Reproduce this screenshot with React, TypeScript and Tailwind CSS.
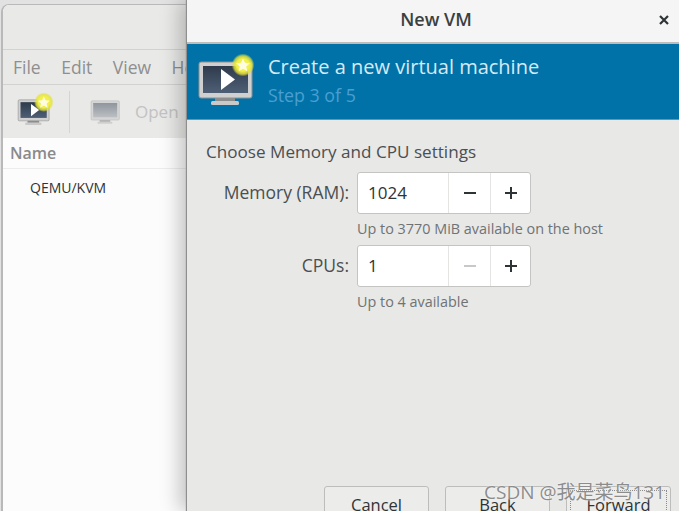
const font = { fontFamily: '"Open Sans", "Noto Sans CJK SC", sans-serif' }

// Monitor + star icon, used in the toolbar and in the banner
function VmIcon({ id, star, faded, className }: { id: string; star?: 'small' | 'large'; faded?: boolean; className: string }) {
  const starTransform = star === 'small' ? 'translate(46 10) scale(1.3)' : 'translate(46 9) scale(0.88)'
  return (
    <svg viewBox="0 0 60 52" className={className} overflow="visible">
      <defs>
        <linearGradient id={`${id}-screen`} x1="0" y1="0" x2="0" y2="1">
          <stop offset="0" stopColor={faded ? '#8f959c' : '#2f3b4c'} />
          <stop offset="1" stopColor={faded ? '#bcc0c4' : '#4e5f75'} />
        </linearGradient>
        <radialGradient id={`${id}-glow`}>
          <stop offset="0.55" stopColor="#f2f04a" />
          <stop offset="0.8" stopColor="#e4e23a" stopOpacity="0.8" />
          <stop offset="1" stopColor="#e4e23a" stopOpacity="0" />
        </radialGradient>
      </defs>
      <rect x="18" y="41" width="20" height="5" fill={faded ? '#b5b5b5' : '#8c8c8c'} />
      <rect x="14" y="45" width="28" height="4" rx="1.5" fill={faded ? '#cfcfcf' : '#c9c9c9'} />
      <rect x="2" y="6" width="53" height="36" rx="2" fill={faded ? '#d6d6d6' : '#d0d0d0'} stroke={faded ? '#b8b8b8' : '#8f8f8f'} strokeWidth="1" />
      <rect x="6" y="10" width="45" height="27" fill={`url(#${id}-screen)`} />
      {!faded && <path d="M24 13 L38 23.5 L24 34 Z" fill="#fff" />}
      {star && (
        <g transform={starTransform}>
          <circle r="13" fill={`url(#${id}-glow)`} />
          <path d="M0 -7.5 L2.3 -2.5 L7.8 -1.9 L3.7 1.8 L4.9 7.2 L0 4.4 L-4.9 7.2 L-3.7 1.8 L-7.8 -1.9 L-2.3 -2.5 Z" fill="#fffde0" />
        </g>
      )}
    </svg>
  )
}

function Spinner({ value, minusDisabled }: { value: string; minusDisabled?: boolean }) {
  return (
    <div className="flex h-[42px] w-[174px] rounded-[3px] border border-[#c4c4c2] bg-white text-[#2e3436]">
      <div className="flex-1 pl-[10px] text-[17px] leading-[40px]">{value}</div>
      <div className={`flex w-[42px] items-center justify-center border-l border-[#e4e4e2] ${minusDisabled ? 'text-[#c8c8c8]' : 'text-[#2e3436]'}`}>
        <span className="h-[2px] w-[12px] bg-current" />
      </div>
      <div className="relative flex w-[40px] items-center justify-center border-l border-[#e4e4e2]">
        <span className="h-[2px] w-[12px] bg-current" />
        <span className="absolute h-[12px] w-[2px] bg-current" />
      </div>
    </div>
  )
}

function FooterButton({ label, dotted }: { label: string; dotted?: boolean }) {
  return (
    <button className="relative h-[34px] w-[105px] rounded-[3px] border border-[#bdbdbb] bg-[#ececeb] pt-[4px] text-center text-[16.5px] text-[#2e3436]">
      {label}
      {dotted && <span className="absolute inset-[3px] border border-dotted border-[#8a8a8a]" />}
    </button>
  )
}

export default function App() {
  return (
    <div className="relative flex h-[511px] w-[679px] overflow-hidden bg-[#e2e2e2]" style={font}>
      {/* Main window behind the dialog */}
      <div className="flex w-[187px] flex-col pl-px pt-[4px]">
        <div className="flex flex-1 flex-col overflow-hidden rounded-tl-[8px] border-l-2 border-t border-[#b9b9b9] bg-white">
          <div className="h-[45px] shrink-0 border-b border-[#d2d2d0] bg-[#e9e9e8]" />
          <div className="flex h-[35px] shrink-0 items-center gap-[20.5px] whitespace-nowrap border-b border-[#d2d2d0] bg-[#e9e9e8] pl-[10px] text-[17.5px] text-[#8f8f8f]">
            <span>File</span>
            <span>Edit</span>
            <span>View</span>
            <span>Help</span>
          </div>
          <div className="flex h-[53px] shrink-0 items-center whitespace-nowrap bg-[#e9e9e8] pl-[14px]">
            <VmIcon id="small" star="small" className="h-[31px] w-[35px]" />
            <div className="ml-[17px] h-[42px] w-px bg-[#d4d4d2]" />
            <VmIcon id="open" faded className="ml-[20px] h-[29px] w-[32px]" />
            <span className="ml-[13px] text-[17px] text-[#c2c2c2]">Open</span>
          </div>
          <div className="flex h-[31px] shrink-0 items-center border-b border-[#ececec] bg-[#fcfcfc] pl-[7px] text-[16px] font-semibold text-[#8a8a8a]">
            Name
          </div>
          <div className="flex-1 bg-[#fcfcfc] pl-[27px] pt-[9px] text-[14px] leading-[20px] text-[#2e3436]">QEMU/KVM</div>
        </div>
      </div>

      {/* New VM dialog */}
      <div className="z-10 flex w-[492px] flex-col bg-[#e8e8e7] shadow-[-1px_0_1px_#8f8f8f,-8px_0_18px_rgba(0,0,0,0.22)]">
        <div className="flex h-[44px] shrink-0 items-center border-b-2 border-[#bdbdbb] bg-[#f5f5f5] pb-[3px] pr-[10px]">
          <span className="flex-1 pl-[26px] text-center text-[18px] font-semibold text-[#3a3f42]">New VM</span>
          <span className="relative h-[10px] w-[10px] text-[#2e3436]">
            <svg viewBox="0 0 10 10" className="h-[10px] w-[10px]">
              <path d="M1 1 L9 9 M9 1 L1 9" stroke="currentColor" strokeWidth="2.2" />
            </svg>
          </span>
        </div>
        <div className="flex h-[76px] shrink-0 border-b border-[#5c98b8] bg-[#0072a8] pl-[10px] pt-[10px]">
          <VmIcon id="banner" star="large" className="mt-[2px] h-[52px] w-[60px]" />
          <div className="ml-[11px]">
            <div className="text-[20px] leading-[26px] text-[#d6eaf5]">Create a new virtual machine</div>
            <div className="mt-[3px] text-[17.8px] leading-[24px] text-[#4a9fd0]">Step 3 of 5</div>
          </div>
        </div>
        <div className="flex-1 pl-[19px] pt-[20px] text-[#4a4f52]">
          <div className="text-[17.1px] leading-[24px]">Choose Memory and CPU settings</div>
          <div className="mt-[8px] grid grid-cols-[143px_174px] gap-x-[8px]">
            <div className="h-[42px] text-right text-[17.5px] leading-[40px]">Memory (RAM):</div>
            <Spinner value="1024" />
            <div />
            <div className="h-[31px] whitespace-nowrap text-[14.4px] leading-[30px] text-[#6f7375]">Up to 3770 MiB available on the host</div>
            <div className="h-[42px] text-right text-[17.5px] leading-[40px]">CPUs:</div>
            <Spinner value="1" minusDisabled />
            <div />
            <div className="h-[31px] text-[14.4px] leading-[30px] text-[#6f7375]">Up to 4 available</div>
          </div>
        </div>
        <div className="flex h-[25px] shrink-0 justify-end gap-[16px] pr-[8px]">
          <FooterButton label="Cancel" />
          <FooterButton label="Back" />
          <FooterButton label="Forward" dotted />
        </div>
      </div>

      {/* Watermark */}
      <div className="absolute left-[484px] top-[479px] z-20 whitespace-nowrap text-[19px] leading-[26px] text-[#8c8c8c] [text-shadow:0_0_2px_#ffffff]">
        CSDN @我是菜鸟131
      </div>
    </div>
  )
}
